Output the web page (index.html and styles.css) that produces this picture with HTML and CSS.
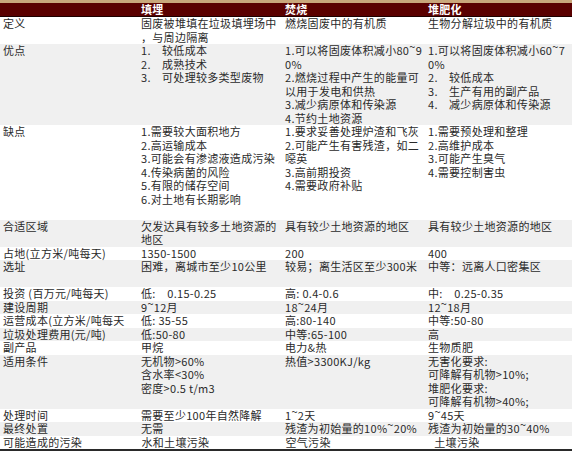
FILE: index.html
```html
<!DOCTYPE html>
<html lang="zh-CN">
<head>
<meta charset="utf-8">
<title>垃圾处理方式对比</title>
<link rel="stylesheet" href="styles.css">
</head>
<body>
<div class="topband"></div>
<table class="cmp">
  <colgroup>
    <col class="c1"><col class="c2"><col class="c3"><col class="c4">
  </colgroup>
  <thead>
    <tr class="head"><th></th><th>填埋</th><th>焚烧</th><th>堆肥化</th></tr>
  </thead>
  <tbody>
    <tr><td>定义</td><td>固废被堆填在垃圾填埋场中<br>，与周边隔离</td><td>燃烧固废中的有机质</td><td>生物分解垃圾中的有机质</td></tr>
    <tr class="g"><td>优点</td><td>1.&emsp;较低成本<br>2.&emsp;成熟技术<br>3.&emsp;可处理较多类型废物</td><td>1.可以将固废体积减小80<span class="t">~</span>9<br>0%<br>2.燃烧过程中产生的能量可<br>以用于发电和供热<br>3.减少病原体和传染源<br>4.节约土地资源</td><td>1.可以将固废体积减小60<span class="t">~</span>7<br>0%<br>2.&emsp;较低成本<br>3.&emsp;生产有用的副产品<br>4.&emsp;减少病原体和传染源</td></tr>
    <tr class="l7"><td>缺点</td><td>1.需要较大面积地方<br>2.高运输成本<br>3.可能会有渗滤液造成污染<br>4.传染病菌的风险<br>5.有限的储存空间<br>6.对土地有长期影响</td><td>1.要求妥善处理炉渣和飞灰<br>2.可能产生有害残渣，如二<br>噁英<br>3.高前期投资<br>4.需要政府补贴</td><td>1.需要预处理和整理<br>2.高维护成本<br>3.可能产生臭气<br>4.需要控制害虫</td></tr>
    <tr class="g"><td>合适区域</td><td>欠发达具有较多土地资源的<br>地区</td><td>具有较少土地资源的地区</td><td>具有较少土地资源的地区</td></tr>
    <tr><td>占地(立方米/吨每天)</td><td>1350-1500</td><td>200</td><td>400</td></tr>
    <tr class="g l2"><td>选址</td><td>困难，离城市至少10公里</td><td>较易；离生活区至少300米</td><td>中等：远离人口密集区</td></tr>
    <tr><td>投资 (百万元/吨每天)</td><td>低:&ensp;&ensp;0.15-0.25</td><td>高: 0.4-0.6</td><td>中:&ensp;&ensp;0.25-0.35</td></tr>
    <tr class="g"><td>建设周期</td><td>9<span class="t">~</span>12月</td><td>18<span class="t">~</span>24月</td><td>12<span class="t">~</span>18月</td></tr>
    <tr><td>运营成本(立方米/吨每天</td><td>低: 35-55</td><td>高:80-140</td><td>中等:50-80</td></tr>
    <tr class="g"><td>垃圾处理费用(元/吨)</td><td>低:50-80</td><td>中等:65-100</td><td>高</td></tr>
    <tr><td>副产品</td><td>甲烷</td><td>电力&amp;热</td><td>生物质肥</td></tr>
    <tr class="g"><td>适用条件</td><td>无机物&gt;60%<br>含水率&lt;30%<br>密度&gt;0.5 t/m3</td><td>热值&gt;3300KJ/kg</td><td>无害化要求:<br>可降解有机物&gt;10%;<br>堆肥化要求:<br>可降解有机物&gt;40%;</td></tr>
    <tr><td>处理时间</td><td>需要至少100年自然降解</td><td>1<span class="t">~</span>2天</td><td>9<span class="t">~</span>45天</td></tr>
    <tr class="g"><td>最终处置</td><td>无需</td><td>残渣为初始量的10%<span class="t">~</span>20%</td><td>残渣为初始量的30<span class="t">~</span>40%</td></tr>
    <tr class="last"><td>可能造成的污染</td><td>水和土壤污染</td><td>空气污染</td><td>&ensp;土壤污染</td></tr>
  </tbody>
</table>
</body>
</html>
```
FILE: styles.css
```css
html, body {
  margin: 0;
  padding: 0;
  background: #ffffff;
}
body {
  width: 572px;
  font-family: "Noto Sans CJK SC", "Noto Sans", sans-serif;
  font-size: 11px;
  letter-spacing: 0.3px;
  color: #2a2a2a;
}
.topband {
  height: 3px;
  background: #c9a77b;
}
.cmp {
  width: 572px;
  border-collapse: collapse;
  table-layout: fixed;
}
.c1 { width: 138px; }
.c2 { width: 144px; }
.c3 { width: 143px; }
.c4 { width: 147px; }
.cmp th,
.cmp td {
  padding: 0 0 0 3px;
  line-height: 13.5px;
  text-align: left;
  vertical-align: top;
  white-space: nowrap;
}
.head th {
  background: #5a0000;
  color: #ffffff;
  font-weight: 700;
  height: 13px;
  line-height: 13px;
  border-bottom: 1px solid #1e0000;
}
.g td {
  background: #f0f0f0;
}
.l7 td { height: 94.5px; }
.l2 td { height: 27px; }
.t {
  position: relative;
  top: -4px;
}
.last td {
  border-bottom: 2px solid #2a2a2a;
  border-right: 1px solid #ffffff;
}
```
